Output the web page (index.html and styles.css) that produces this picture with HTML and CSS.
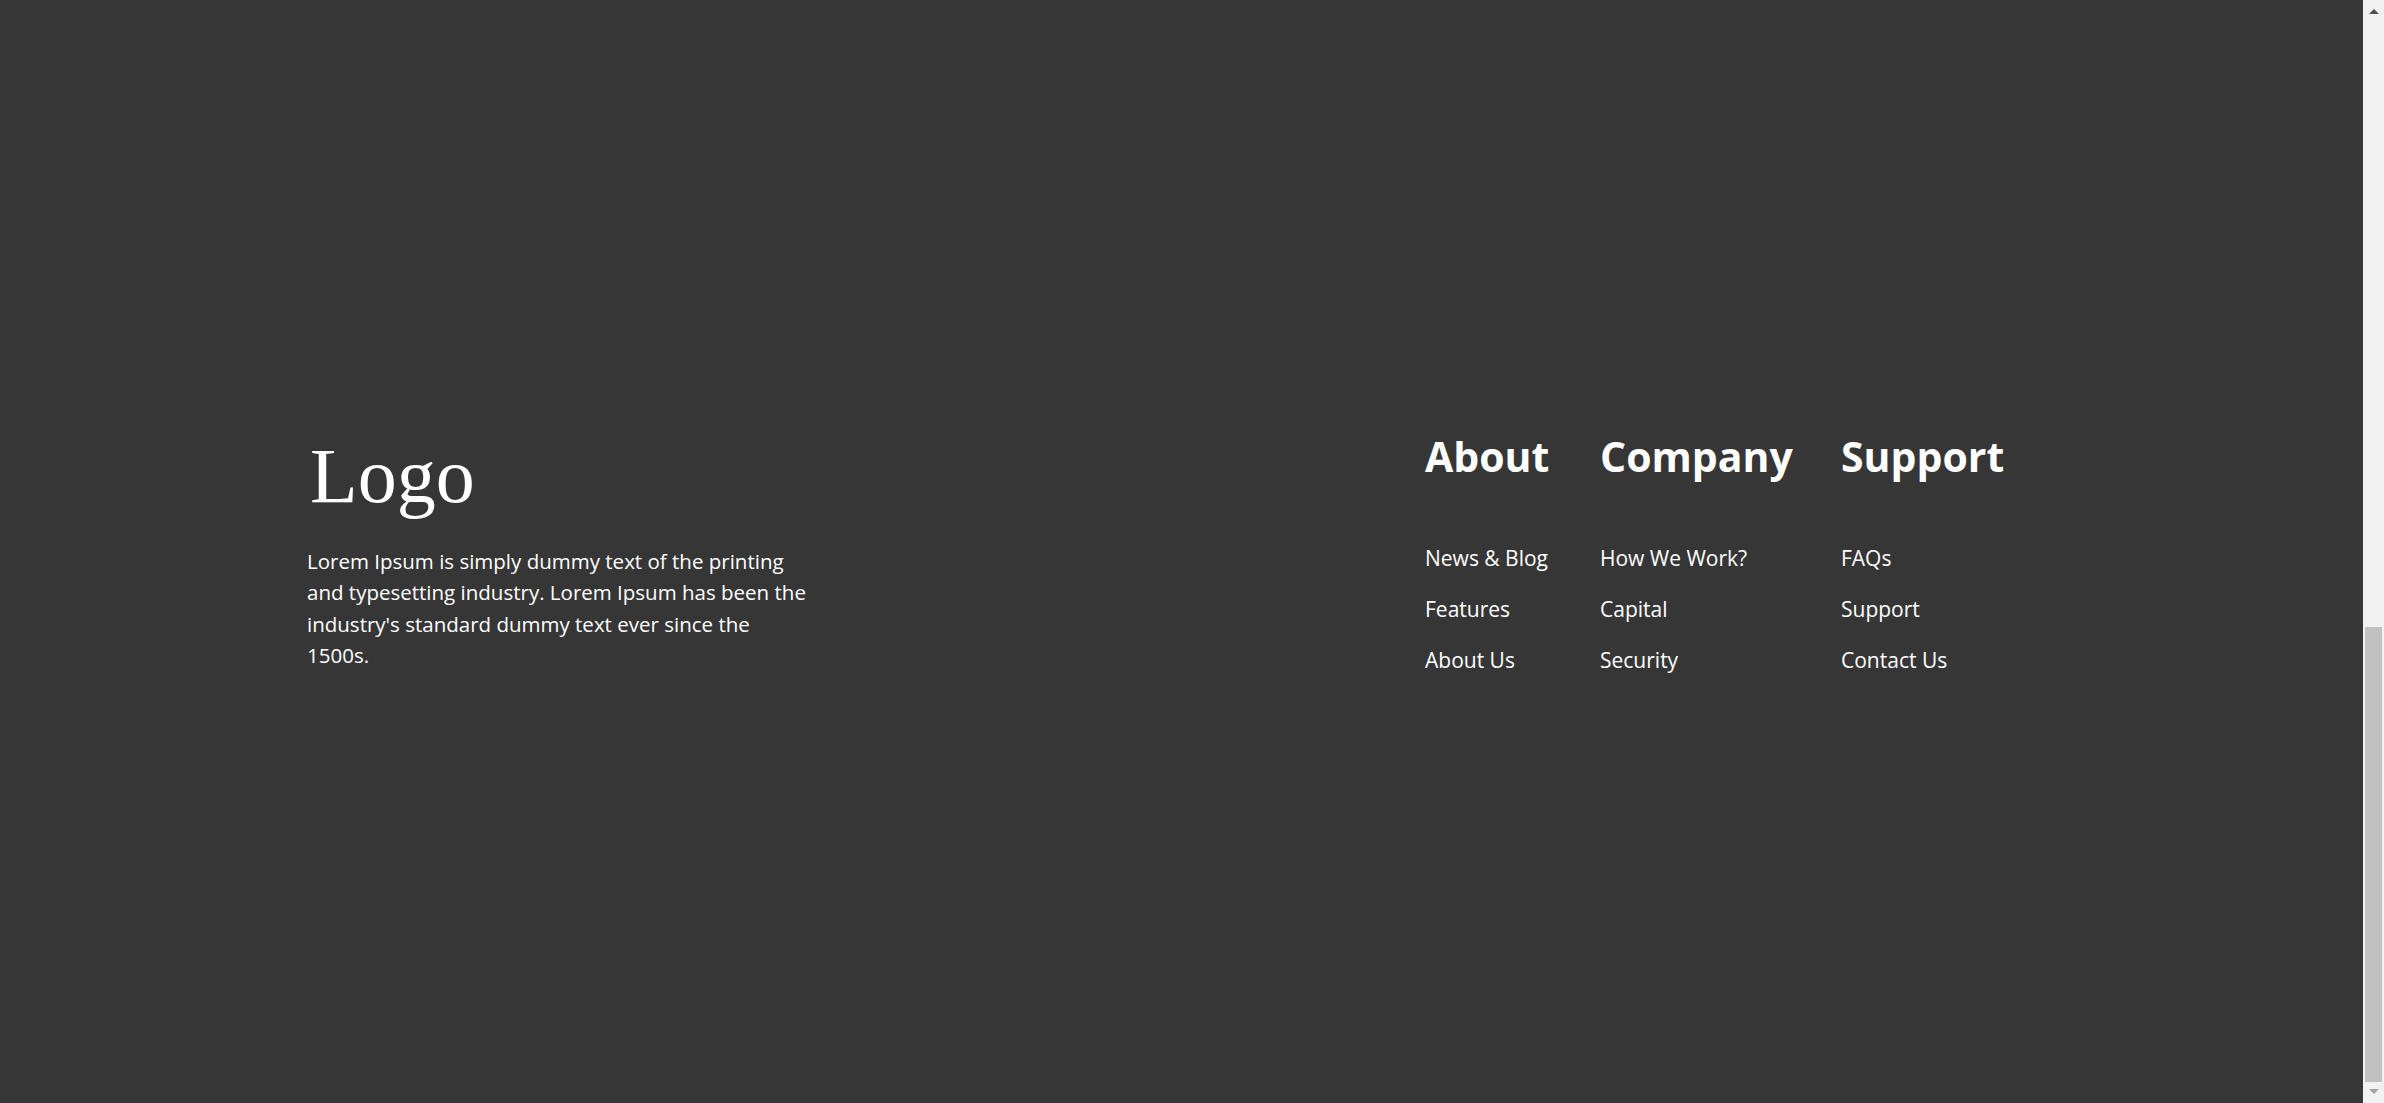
FILE: index.html
```html
<!DOCTYPE html>
<html lang="en">
<head>
<meta charset="utf-8">
<title>Footer</title>
<link rel="stylesheet" href="styles.css">
</head>
<body>
<div class="window">
  <div class="screen">
    <footer class="footer">
      <div class="footer-inner">
        <div class="brand">
          <div class="logo">Logo</div>
          <p class="brand-text">Lorem Ipsum is simply dummy text of the printing and typesetting industry. Lorem Ipsum has been the industry's standard dummy text ever since the 1500s.</p>
        </div>
        <nav class="footer-nav">
          <div class="nav-col">
            <h3 class="nav-title">About</h3>
            <ul class="nav-list">
              <li class="nav-item"><a class="nav-link" href="#">News &amp; Blog</a></li>
              <li class="nav-item"><a class="nav-link" href="#">Features</a></li>
              <li class="nav-item"><a class="nav-link" href="#">About Us</a></li>
            </ul>
          </div>
          <div class="nav-col">
            <h3 class="nav-title">Company</h3>
            <ul class="nav-list">
              <li class="nav-item"><a class="nav-link" href="#">How We Work?</a></li>
              <li class="nav-item"><a class="nav-link" href="#">Capital</a></li>
              <li class="nav-item"><a class="nav-link" href="#">Security</a></li>
            </ul>
          </div>
          <div class="nav-col">
            <h3 class="nav-title">Support</h3>
            <ul class="nav-list">
              <li class="nav-item"><a class="nav-link" href="#">FAQs</a></li>
              <li class="nav-item"><a class="nav-link" href="#">Support</a></li>
              <li class="nav-item"><a class="nav-link" href="#">Contact Us</a></li>
            </ul>
          </div>
        </nav>
      </div>
    </footer>
  </div>
  <div class="scrollbar" aria-hidden="true">
    <div class="sb-button sb-button-up"><span class="sb-arrow-up"></span></div>
    <div class="sb-track">
      <div class="sb-space"></div>
      <div class="sb-thumb"></div>
    </div>
    <div class="sb-button sb-button-down"><span class="sb-arrow-down"></span></div>
  </div>
</div>
</body>
</html>
```
FILE: styles.css
```css
html, body {
  margin: 0;
  height: 100%;
  overflow: hidden;
  background: #363636;
}

.window {
  display: flex;
  height: 100vh;
}

.screen {
  flex: 1;
  min-width: 0;
  background: #363636;
}

/* fake browser scrollbar (page scrolled to the bottom) */
.scrollbar {
  flex: 0 0 21px;
  display: flex;
  flex-direction: column;
  background: #f1f1f1;
}

.sb-button {
  flex: 0 0 21px;
  display: flex;
  justify-content: center;
  align-items: flex-start;
  box-sizing: border-box;
}

.sb-button-up {
  padding-top: 9px;
}

.sb-button-down {
  padding-top: 7px;
}

.sb-arrow-up {
  width: 0;
  height: 0;
  border-left: 5px solid transparent;
  border-right: 5px solid transparent;
  border-bottom: 5px solid #505050;
}

.sb-arrow-down {
  width: 0;
  height: 0;
  border-left: 5px solid transparent;
  border-right: 5px solid transparent;
  border-top: 5px solid #a3a3a3;
}

.sb-track {
  flex: 1;
  display: flex;
  flex-direction: column;
  padding: 0 2px;
}

.sb-space {
  flex: 1;
}

.sb-thumb {
  flex: 0 0 455px;
  background: #c1c1c1;
}

/* footer */
.footer {
  height: 100vh;
  box-sizing: border-box;
  padding-top: 431px;
  color: #ffffff;
}

.footer-inner {
  display: grid;
  grid-template-columns: 1118px auto;
  align-items: start;
  padding-left: 307px;
}

.logo {
  padding-left: 3px;
  font-family: "Liberation Serif", serif;
  font-size: 78px;
  line-height: 90px;
}

.brand-text {
  margin: 25px 0 0;
  width: 504px;
  font-family: "Open Sans", "Noto Sans", sans-serif;
  font-size: 20.5px;
  line-height: 31.3px;
}

.footer-nav {
  display: grid;
  grid-template-columns: 124px 190px 163px;
  column-gap: 51px;
  padding-top: 1px;
}

.nav-title {
  margin: 0;
  font-family: "Open Sans", "Noto Sans", sans-serif;
  font-weight: 700;
  font-size: 41px;
  line-height: 49px;
  white-space: nowrap;
}

.nav-list {
  list-style: none;
  margin: 62px 0 0;
  padding: 0;
  display: flex;
  flex-direction: column;
  gap: 21px;
}

.nav-item {
  font-family: "Open Sans", "Noto Sans", sans-serif;
  font-size: 21px;
  line-height: 30px;
}

.nav-link {
  color: #ffffff;
  text-decoration: none;
  white-space: nowrap;
}
```
